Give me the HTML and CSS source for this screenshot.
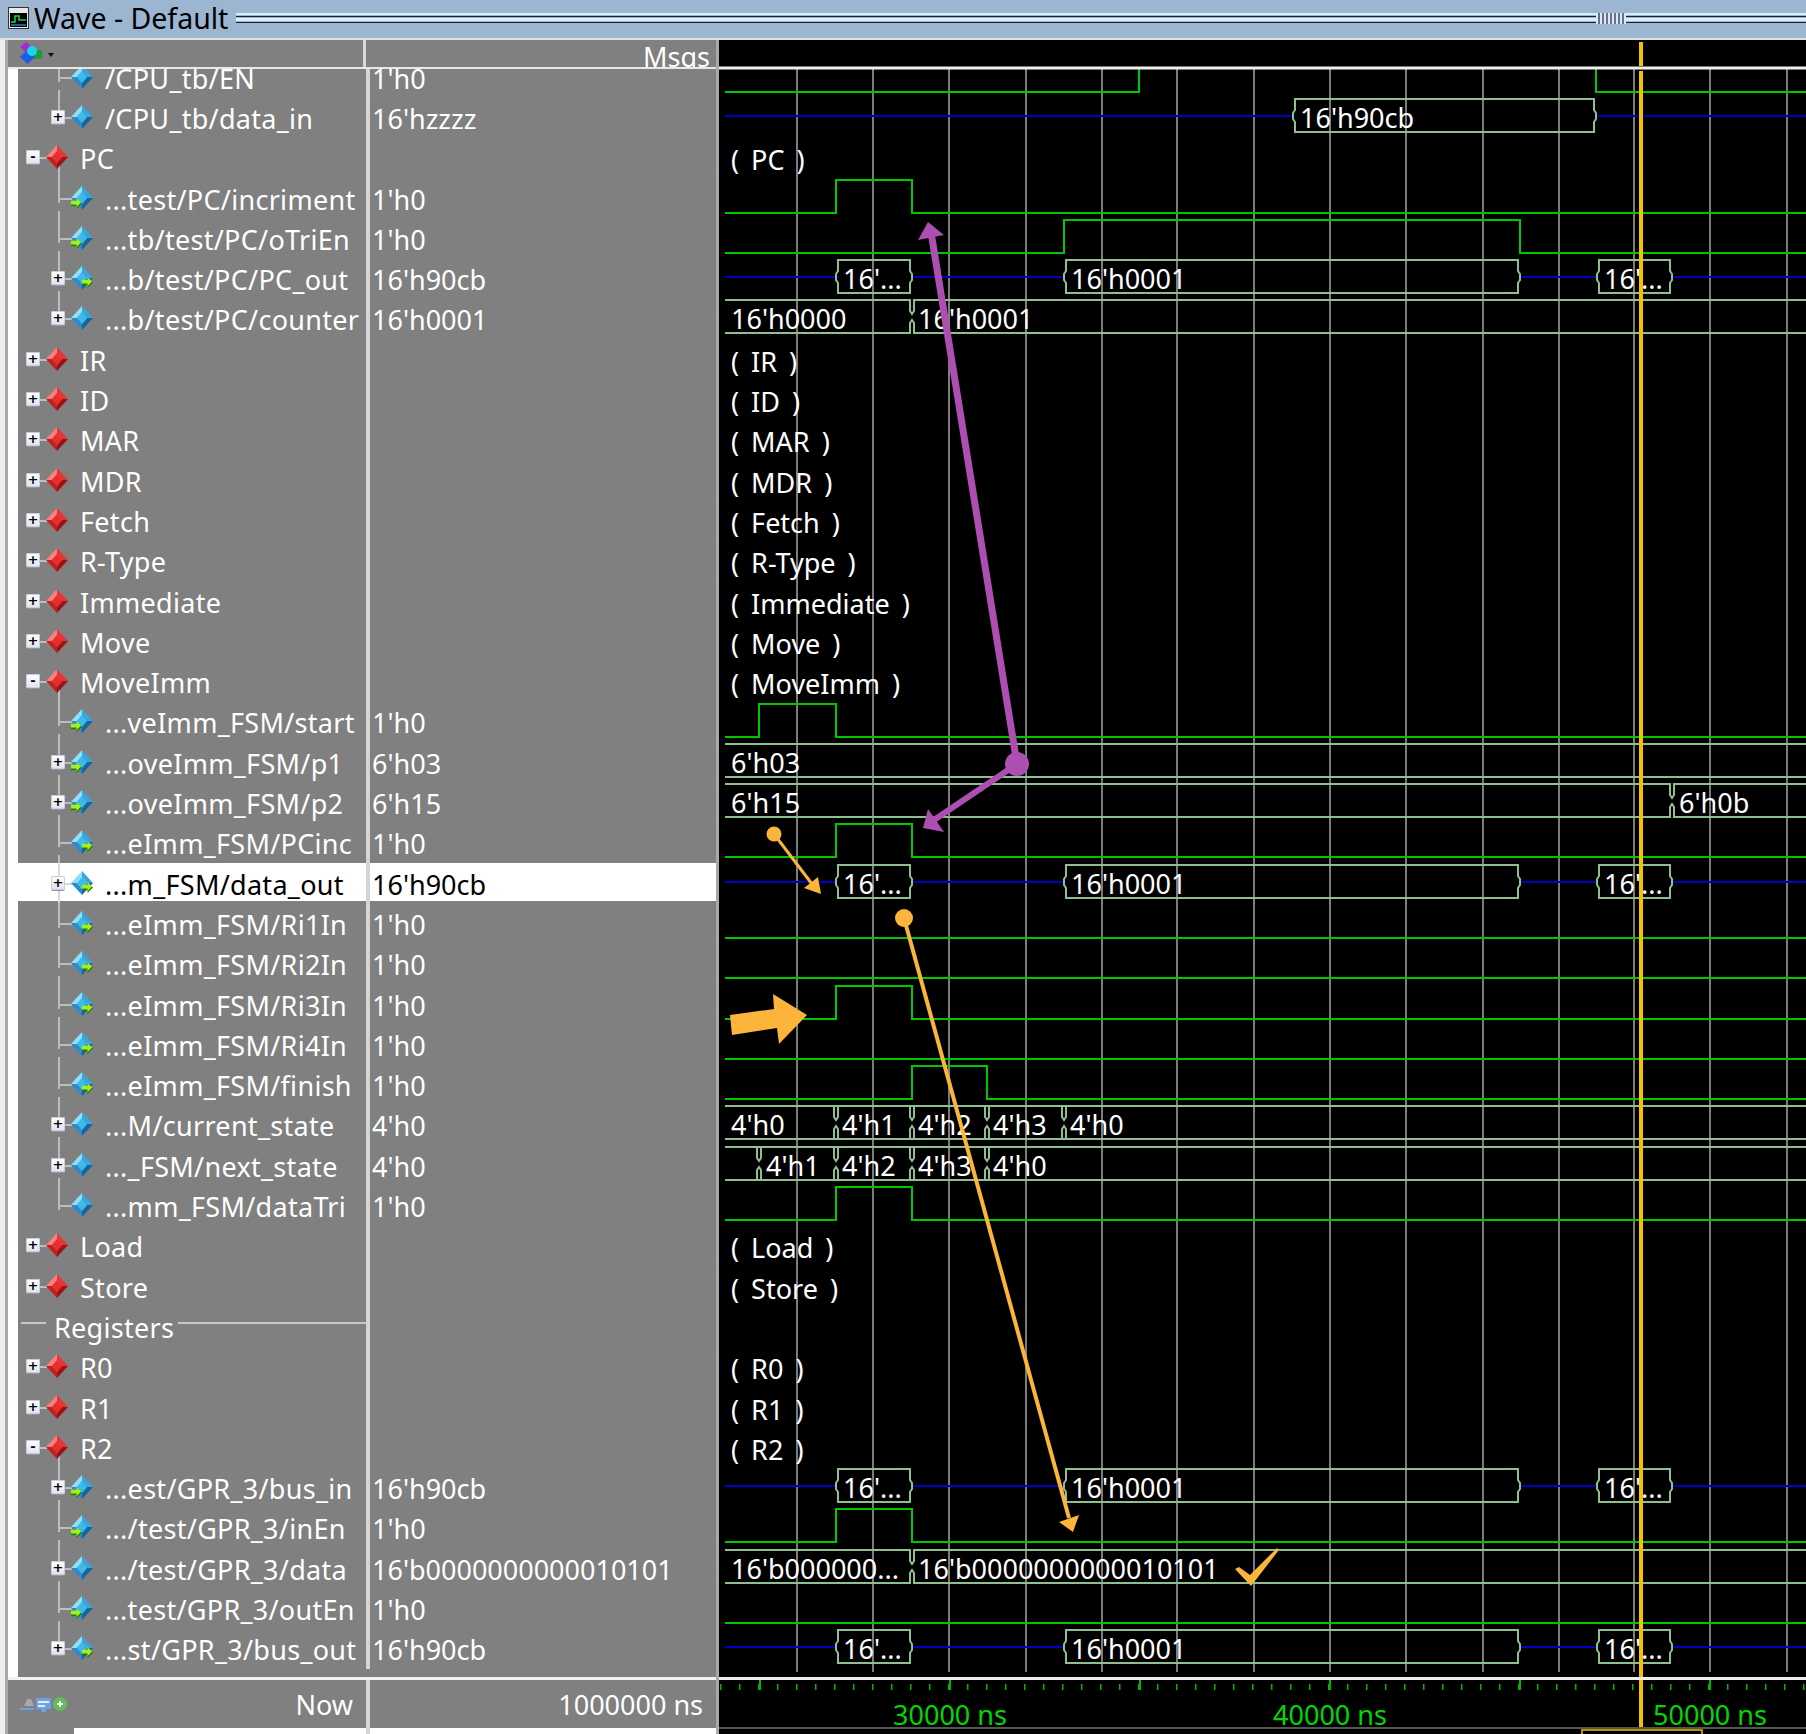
FILE: index.html
```html
<!DOCTYPE html>
<html lang="en">
<head>
    <meta charset="UTF-8">
    <title>Wave - Default</title>
    <link rel="stylesheet" href="styles.css">
</head>
<body>
<svg class="sprite" width="0" height="0">
    <symbol id="d-blue" viewBox="0 0 24 26">
        <polygon points="12,1 1,13 7,13 12,7" fill="#8fdff8"/>
        <polygon points="12,1 23,13 17,13 12,7" fill="#35a6df"/>
        <polygon points="23,13 12,25 12,19 17,13" fill="#15659e"/>
        <polygon points="1,13 12,25 12,19 7,13" fill="#2a8ccc"/>
        <polygon points="12,7 17,13 12,19 7,13" fill="#3cbaea"/>
    </symbol>
    <symbol id="d-red" viewBox="0 0 24 26">
        <polygon points="12,1 1,13 7,13 12,7" fill="#f98080"/>
        <polygon points="12,1 23,13 17,13 12,7" fill="#e83434"/>
        <polygon points="23,13 12,25 12,19 17,13" fill="#a01212"/>
        <polygon points="1,13 12,25 12,19 7,13" fill="#c42020"/>
        <polygon points="12,7 17,13 12,19 7,13" fill="#ea2c2c"/>
    </symbol>
    <symbol id="arrow" viewBox="0 0 12 12">
        <polygon points="0,4 6,4 6,1 12,6 6,12 6,9 0,9" fill="#1f7d10"/>
        <polygon points="0,3 6,3 6,0 11,5 6,10 6,7 0,7" fill="#a4f01e"/>
    </symbol>
    <symbol id="sig" viewBox="0 0 24 26"><use href="#d-blue"/></symbol>
    <symbol id="sig-in" viewBox="0 0 24 26">
        <use href="#d-blue"/>
        <use href="#arrow" x="1" y="13" width="11" height="11"/>
    </symbol>
    <symbol id="sig-out" viewBox="0 0 24 26">
        <use href="#d-blue"/>
        <use href="#arrow" x="12" y="12" width="11" height="11"/>
    </symbol>
</svg>

<div class="app">
    <div class="title">
        <svg class="title-icon" width="21" height="22" viewBox="0 0 21 22">
            <rect x="0.5" y="0.5" width="20" height="21" fill="#e8e8e8" stroke="#333"/>
            <rect x="2" y="6" width="17" height="14" fill="#000"/>
            <path d="M3 15H7V9H11V13H18" fill="none" stroke="#19d64a" stroke-width="1.5"/>
            <path d="M3 18H18" stroke="#2a7ae0" stroke-width="1.5"/>
        </svg>
        <span class="title-text">Wave - Default</span>
        <div class="grip">
            <div class="grip-lines"></div>
            <div class="grip-dots"></div>
            <div class="grip-lines"></div>
        </div>
    </div>

    <div class="main">
        <div class="side">
            <div class="head">
                <div class="hname">
                    <svg width="40" height="24" viewBox="0 0 40 24">
                        <polygon points="2,6 8,1 14,6 8,11" fill="#a32bd0"/>
                        <rect x="10" y="9" width="14" height="9" fill="#1f9a3a"/>
                        <polygon points="2,16 9.5,9 17,16 9.5,23" fill="#1c5de8"/>
                        <circle cx="14" cy="10" r="5" fill="#19d6ee"/>
                        <polygon points="30,12 36,12 33,16" fill="#111"/>
                    </svg>
                </div>
                <div class="hval">Msgs</div>
            </div>

            <div class="list">
                <div class="row first"><div class="name kid"><b class="nobox"></b><svg class="ic"><use href="#sig"/></svg><span>/CPU_tb/EN</span></div><div class="val">1'h0</div></div>
                <div class="row"><div class="name kid end"><b class="box">+</b><svg class="ic"><use href="#sig"/></svg><span>/CPU_tb/data_in</span></div><div class="val">16'hzzzz</div></div>
                <div class="row"><div class="name top open"><b class="box">-</b><svg class="ic"><use href="#d-red"/></svg><span>PC</span></div><div class="val"></div></div>
                <div class="row"><div class="name kid"><b class="nobox"></b><svg class="ic"><use href="#sig-in"/></svg><span>...test/PC/incriment</span></div><div class="val">1'h0</div></div>
                <div class="row"><div class="name kid"><b class="nobox"></b><svg class="ic"><use href="#sig-in"/></svg><span>...tb/test/PC/oTriEn</span></div><div class="val">1'h0</div></div>
                <div class="row"><div class="name kid"><b class="box">+</b><svg class="ic"><use href="#sig-out"/></svg><span>...b/test/PC/PC_out</span></div><div class="val">16'h90cb</div></div>
                <div class="row"><div class="name kid end"><b class="box">+</b><svg class="ic"><use href="#sig"/></svg><span>...b/test/PC/counter</span></div><div class="val">16'h0001</div></div>
                <div class="row"><div class="name top"><b class="box">+</b><svg class="ic"><use href="#d-red"/></svg><span>IR</span></div><div class="val"></div></div>
                <div class="row"><div class="name top"><b class="box">+</b><svg class="ic"><use href="#d-red"/></svg><span>ID</span></div><div class="val"></div></div>
                <div class="row"><div class="name top"><b class="box">+</b><svg class="ic"><use href="#d-red"/></svg><span>MAR</span></div><div class="val"></div></div>
                <div class="row"><div class="name top"><b class="box">+</b><svg class="ic"><use href="#d-red"/></svg><span>MDR</span></div><div class="val"></div></div>
                <div class="row"><div class="name top"><b class="box">+</b><svg class="ic"><use href="#d-red"/></svg><span>Fetch</span></div><div class="val"></div></div>
                <div class="row"><div class="name top"><b class="box">+</b><svg class="ic"><use href="#d-red"/></svg><span>R-Type</span></div><div class="val"></div></div>
                <div class="row"><div class="name top"><b class="box">+</b><svg class="ic"><use href="#d-red"/></svg><span>Immediate</span></div><div class="val"></div></div>
                <div class="row"><div class="name top"><b class="box">+</b><svg class="ic"><use href="#d-red"/></svg><span>Move</span></div><div class="val"></div></div>
                <div class="row"><div class="name top open"><b class="box">-</b><svg class="ic"><use href="#d-red"/></svg><span>MoveImm</span></div><div class="val"></div></div>
                <div class="row"><div class="name kid"><b class="nobox"></b><svg class="ic"><use href="#sig-in"/></svg><span>...veImm_FSM/start</span></div><div class="val">1'h0</div></div>
                <div class="row"><div class="name kid"><b class="box">+</b><svg class="ic"><use href="#sig-in"/></svg><span>...oveImm_FSM/p1</span></div><div class="val">6'h03</div></div>
                <div class="row"><div class="name kid"><b class="box">+</b><svg class="ic"><use href="#sig-in"/></svg><span>...oveImm_FSM/p2</span></div><div class="val">6'h15</div></div>
                <div class="row"><div class="name kid"><b class="nobox"></b><svg class="ic"><use href="#sig-out"/></svg><span>...eImm_FSM/PCinc</span></div><div class="val">1'h0</div></div>
                <div class="row sel"><div class="name kid"><b class="box">+</b><svg class="ic"><use href="#sig-out"/></svg><span>...m_FSM/data_out</span></div><div class="val">16'h90cb</div></div>
                <div class="row"><div class="name kid"><b class="nobox"></b><svg class="ic"><use href="#sig-out"/></svg><span>...eImm_FSM/Ri1In</span></div><div class="val">1'h0</div></div>
                <div class="row"><div class="name kid"><b class="nobox"></b><svg class="ic"><use href="#sig-out"/></svg><span>...eImm_FSM/Ri2In</span></div><div class="val">1'h0</div></div>
                <div class="row"><div class="name kid"><b class="nobox"></b><svg class="ic"><use href="#sig-out"/></svg><span>...eImm_FSM/Ri3In</span></div><div class="val">1'h0</div></div>
                <div class="row"><div class="name kid"><b class="nobox"></b><svg class="ic"><use href="#sig-out"/></svg><span>...eImm_FSM/Ri4In</span></div><div class="val">1'h0</div></div>
                <div class="row"><div class="name kid"><b class="nobox"></b><svg class="ic"><use href="#sig-out"/></svg><span>...eImm_FSM/finish</span></div><div class="val">1'h0</div></div>
                <div class="row"><div class="name kid"><b class="box">+</b><svg class="ic"><use href="#sig"/></svg><span>...M/current_state</span></div><div class="val">4'h0</div></div>
                <div class="row"><div class="name kid"><b class="box">+</b><svg class="ic"><use href="#sig"/></svg><span>..._FSM/next_state</span></div><div class="val">4'h0</div></div>
                <div class="row"><div class="name kid end"><b class="nobox"></b><svg class="ic"><use href="#sig"/></svg><span>...mm_FSM/dataTri</span></div><div class="val">1'h0</div></div>
                <div class="row"><div class="name top"><b class="box">+</b><svg class="ic"><use href="#d-red"/></svg><span>Load</span></div><div class="val"></div></div>
                <div class="row"><div class="name top"><b class="box">+</b><svg class="ic"><use href="#d-red"/></svg><span>Store</span></div><div class="val"></div></div>
                <div class="row"><div class="name divider"><span>Registers</span></div><div class="val"></div></div>
                <div class="row"><div class="name top"><b class="box">+</b><svg class="ic"><use href="#d-red"/></svg><span>R0</span></div><div class="val"></div></div>
                <div class="row"><div class="name top"><b class="box">+</b><svg class="ic"><use href="#d-red"/></svg><span>R1</span></div><div class="val"></div></div>
                <div class="row"><div class="name top open"><b class="box">-</b><svg class="ic"><use href="#d-red"/></svg><span>R2</span></div><div class="val"></div></div>
                <div class="row"><div class="name kid"><b class="box">+</b><svg class="ic"><use href="#sig-in"/></svg><span>...est/GPR_3/bus_in</span></div><div class="val">16'h90cb</div></div>
                <div class="row"><div class="name kid"><b class="nobox"></b><svg class="ic"><use href="#sig-in"/></svg><span>.../test/GPR_3/inEn</span></div><div class="val">1'h0</div></div>
                <div class="row"><div class="name kid"><b class="box">+</b><svg class="ic"><use href="#sig"/></svg><span>.../test/GPR_3/data</span></div><div class="val">16'b0000000000010101</div></div>
                <div class="row"><div class="name kid"><b class="nobox"></b><svg class="ic"><use href="#sig-in"/></svg><span>...test/GPR_3/outEn</span></div><div class="val">1'h0</div></div>
                <div class="row"><div class="name kid end"><b class="box">+</b><svg class="ic"><use href="#sig-out"/></svg><span>...st/GPR_3/bus_out</span></div><div class="val">16'h90cb</div></div>
            </div>

            <div class="foot">
                <div class="fname">
                    <svg width="48" height="16" viewBox="0 0 48 16">
                        <path d="M4 9L7 2H11L14 9Z" fill="#a8a8a8"/>
                        <path d="M0 12H14" stroke="#6ba2e4" stroke-width="2"/>
                        <rect x="16" y="1" width="15" height="11" fill="#6ba2e4"/>
                        <rect x="18" y="4" width="11" height="2" fill="#e2ecf8"/>
                        <rect x="18" y="8" width="7" height="2" fill="#e2ecf8"/>
                        <rect x="21" y="12" width="5" height="3" fill="#6ba2e4"/>
                        <circle cx="40" cy="7" r="7" fill="#66bc5c"/>
                        <path d="M37 7H43M40 4V10" stroke="#eef8ec" stroke-width="2"/>
                    </svg>
                    <span>Now</span>
                </div>
                <div class="fval">1000000 ns</div>
            </div>
        </div>

        <svg class="waves" width="1087" height="1694" viewBox="719 40 1087 1694">
            <defs>
                <path id="pulse" class="g" d="M725 35H836V2H912V35H1806"/>
                <path id="flat" class="g" d="M725 35H1806"/>
                <g id="pcbus">
                    <path class="b" d="M725 19H836M912 19H1064M1520 19H1597M1672 19H1806"/>
                    <path class="bus" d="M838 2H910V13L912 16V22L910 25V35H838V25L836 22V16L838 13Z"/>
                    <path class="bus" d="M1066 2H1518V13L1520 16V22L1518 25V35H1066V25L1064 22V16L1066 13Z"/>
                    <path class="bus" d="M1599 2H1670V13L1672 16V22L1670 25V35H1599V25L1597 22V16L1599 13Z"/>
                    <text x="843" y="31">16'...</text>
                    <text x="1071" y="31">16'h0001</text>
                    <text x="1604" y="31">16'...</text>
                </g>
            </defs>

            <!-- grid every 2000 ns -->
            <path class="grid" d="M797 69V1672M873 69V1672M949 69V1672M1026 69V1672M1102 69V1672M1177 69V1672M1254 69V1672M1330 69V1672M1406 69V1672M1483 69V1672M1559 69V1672M1634 69V1672M1710 69V1672M1787 69V1672"/>

            <g transform="translate(0 57)"><path class="g" d="M725 35H1139V-20M1596 -20V35H1806"/></g>
            <g transform="translate(0 97)">
                <path class="b" d="M725 19H1293M1596 19H1806"/>
                <path class="bus" d="M1295 2H1594V13L1596 16V22L1594 25V35H1295V25L1293 22V16L1295 13Z"/>
                <text x="1300" y="31">16'h90cb</text>
            </g>
            <g transform="translate(0 137)"><text x="731" y="33">( PC )</text></g>
            <use href="#pulse" y="178"/>
            <g transform="translate(0 218)"><path class="g" d="M725 35H1064V2H1520V35H1806"/></g>
            <use href="#pcbus" y="258"/>
            <g transform="translate(0 298)">
                <path class="bus" d="M725 2H910V13L912 16L914 13V2H1806M1806 35H914V25L912 22L910 25V35H725"/>
                <text x="731" y="31">16'h0000</text>
                <text x="918" y="31">16'h0001</text>
            </g>
            <g transform="translate(0 339)"><text x="731" y="33">( IR )</text></g>
            <g transform="translate(0 379)"><text x="731" y="33">( ID )</text></g>
            <g transform="translate(0 419)"><text x="731" y="33">( MAR )</text></g>
            <g transform="translate(0 460)"><text x="731" y="33">( MDR )</text></g>
            <g transform="translate(0 500)"><text x="731" y="33">( Fetch )</text></g>
            <g transform="translate(0 540)"><text x="731" y="33">( R-Type )</text></g>
            <g transform="translate(0 581)"><text x="731" y="33">( Immediate )</text></g>
            <g transform="translate(0 621)"><text x="731" y="33">( Move )</text></g>
            <g transform="translate(0 661)"><text x="731" y="33">( MoveImm )</text></g>
            <g transform="translate(0 702)"><path class="g" d="M725 35H759V2H836V35H1806"/></g>
            <g transform="translate(0 742)">
                <path class="bus" d="M725 2H1806M725 35H1806"/>
                <text x="731" y="31">6'h03</text>
            </g>
            <g transform="translate(0 782)">
                <path class="bus" d="M725 2H1670V13L1672 16L1674 13V2H1806M1806 35H1674V25L1672 22L1670 25V35H725"/>
                <text x="731" y="31">6'h15</text>
                <text x="1679" y="31">6'h0b</text>
            </g>
            <use href="#pulse" y="822"/>
            <use href="#pcbus" y="863"/>
            <use href="#flat" y="903"/>
            <use href="#flat" y="943"/>
            <use href="#pulse" y="984"/>
            <use href="#flat" y="1024"/>
            <g transform="translate(0 1064)"><path class="g" d="M725 35H912V2H987V35H1806"/></g>
            <g transform="translate(0 1104)">
                <path class="bus" d="M725 2H1806M725 35H1806"/>
                <path class="bus" d="M834 2V13L836 16L838 13V2M838 35V25L836 22L834 25V35M910 2V13L912 16L914 13V2M914 35V25L912 22L910 25V35M985 2V13L987 16L989 13V2M989 35V25L987 22L985 25V35M1062 2V13L1064 16L1066 13V2M1066 35V25L1064 22L1062 25V35"/>
                <text x="731" y="31">4'h0</text>
                <text x="842" y="31">4'h1</text>
                <text x="918" y="31">4'h2</text>
                <text x="993" y="31">4'h3</text>
                <text x="1070" y="31">4'h0</text>
            </g>
            <g transform="translate(0 1145)">
                <path class="bus" d="M725 2H1806M725 35H1806"/>
                <path class="bus" d="M757 2V13L759 16L761 13V2M761 35V25L759 22L757 25V35M834 2V13L836 16L838 13V2M838 35V25L836 22L834 25V35M910 2V13L912 16L914 13V2M914 35V25L912 22L910 25V35M985 2V13L987 16L989 13V2M989 35V25L987 22L985 25V35"/>
                <text x="766" y="31">4'h1</text>
                <text x="842" y="31">4'h2</text>
                <text x="918" y="31">4'h3</text>
                <text x="993" y="31">4'h0</text>
            </g>
            <use href="#pulse" y="1185"/>
            <g transform="translate(0 1225)"><text x="731" y="33">( Load )</text></g>
            <g transform="translate(0 1266)"><text x="731" y="33">( Store )</text></g>
            <g transform="translate(0 1346)"><text x="731" y="33">( R0 )</text></g>
            <g transform="translate(0 1387)"><text x="731" y="33">( R1 )</text></g>
            <g transform="translate(0 1427)"><text x="731" y="33">( R2 )</text></g>
            <use href="#pcbus" y="1467"/>
            <use href="#pulse" y="1507"/>
            <g transform="translate(0 1548)">
                <path class="bus" d="M725 2H910V13L912 16L914 13V2H1806M1806 35H914V25L912 22L910 25V35H725"/>
                <text x="731" y="31">16'b000000...</text>
                <text x="918" y="31">16'b0000000000010101</text>
            </g>
            <use href="#flat" y="1588"/>
            <use href="#pcbus" y="1628"/>

            <!-- header, separators, ruler -->
            <rect x="719" y="40" width="1087" height="27" fill="#000"/>
            <path class="sep" d="M719 68H1806M719 1678.5H1806"/>
            <path class="cursor" d="M1641 42V66M1641 71V1677M1641 1680V1728"/>
            <rect x="1582" y="1730" width="120" height="10" fill="#000" stroke="#b89000" stroke-width="2"/>
            <path d="M719 1728H1806" stroke="#555" stroke-width="2"/>
            <path class="tick" d="M720 1687H1806"/>
            <path class="major" d="M759 1685H1806"/>
            <text class="ruler" x="950" y="1725">30000 ns</text>
            <text class="ruler" x="1330" y="1725">40000 ns</text>
            <text class="ruler" x="1710" y="1725">50000 ns</text>

            <!-- annotations drawn on top of the capture -->
            <path class="purple" stroke-width="7" d="M1017 764L931 232"/>
            <polygon fill="#ad4fb0" points="928,222 918,240 944,235"/>
            <path class="purple" stroke-width="6" d="M1017 764L934 820"/>
            <polygon fill="#ad4fb0" points="923,828 928,809 944,832"/>
            <circle cx="1017" cy="764" r="12" fill="#ad4fb0"/>

            <path class="orange" stroke-width="3" d="M774 834L815 888"/>
            <polygon class="ofill" points="821,894 804,888 818,877"/>
            <circle class="ofill" cx="774" cy="834" r="7.5"/>
            <path class="orange" stroke-width="4" d="M904 918L1069 1518"/>
            <polygon class="ofill" points="1073,1532 1059,1522 1079,1515"/>
            <circle class="ofill" cx="904" cy="918" r="9"/>
            <polygon class="ofill" points="730,1015 774,1009 773,994 807,1015 779,1044 777,1028 732,1035"/>
            <polygon class="ofill" points="1235,1569 1251,1586 1279,1550 1277,1548 1250,1575 1239,1567"/>
        </svg>
    </div>
</div>
</body>
</html>
```

FILE: styles.css
```css
*
{
    box-sizing: border-box;
}
html, body
{
    margin: 0;
    padding: 0;
    background: #000;
}
.sprite
{
    display: block;
    height: 0;
}
.app
{
    width: 1806px;
    height: 1734px;
    display: flex;
    flex-direction: column;
    overflow: hidden;
    font-family: "Noto Sans", Tahoma, sans-serif;
    font-size: 27px;
    line-height: 43px;
    color: #fff;
}
.title
{
    height: 40px;
    flex: none;
    display: flex;
    align-items: center;
    padding: 0 0 2px 8px;
    background: #9cb6d2;
    border-bottom: 2px solid #e2e2e2;
    color: #000;
}
.title-icon
{
    flex: none;
    margin-right: 5px;
}
.title-text
{
    flex: none;
    margin-right: 8px;
    font-size: 28.5px;
    line-height: 38px;
}
.grip
{
    flex: 1;
    display: flex;
    align-items: center;
}
.grip-lines
{
    height: 11px;
    background:
        linear-gradient(#d9eefb, #d9eefb) 0 0 / 100% 2px no-repeat,
        linear-gradient(#1c2328, #1c2328) 0 3px / 100% 1px no-repeat,
        linear-gradient(#d9eefb, #d9eefb) 0 5px / 100% 3px no-repeat,
        linear-gradient(#1c2328, #1c2328) 0 9px / 100% 1px no-repeat;
}
.grip-lines:first-child
{
    width: 1360px;
}
.grip-lines:last-child
{
    flex: 1;
}
.grip-dots
{
    width: 30px;
    height: 11px;
    background: repeating-linear-gradient(90deg, #dfe8f2 0 2px, #63748a 2px 4px);
}
.main
{
    flex: 1;
    display: flex;
    min-height: 0;
}
.side
{
    width: 719px;
    flex: none;
    display: flex;
    flex-direction: column;
    background: #808080;
    border-left: 5px solid #eeeeee;
    border-right: 3px solid #a8a8a8;
    box-shadow: inset 3px 0 0 #a8a8a8;
}
.head
{
    height: 29px;
    flex: none;
    display: flex;
    margin-left: 3px;
    border-bottom: 2px solid #e8e8e8;
}
.hname
{
    width: 358px;
    flex: none;
    padding: 1px 0 0 10px;
    border-right: 3px solid #d8d8d8;
}
.hname svg
{
    display: block;
}
.hval
{
    flex: 1;
    height: 27px;
    overflow: hidden;
    text-align: right;
    padding-right: 6px;
    line-height: 33px;
}
.list
{
    flex: 1;
    min-height: 0;
    overflow: hidden;
    margin-left: 3px;
    border-left: 10px solid #fff;
}
.row
{
    height: 40.3px;
    display: flex;
}
.row.first
{
    margin-top: -12.3px;
}
.name
{
    width: 352px;
    flex: none;
    display: flex;
    align-items: flex-start;
    overflow: hidden;
    white-space: nowrap;
    letter-spacing: 0.3px;
    border-right: 4px solid #d4d4d4;
    background-clip: padding-box;
}
.val
{
    flex: 1;
    padding-left: 2px;
    white-space: nowrap;
}
.box, .nobox
{
    width: 14px;
    height: 14px;
    flex: none;
    margin: 13px 0 0;
}
.box
{
    display: flex;
    align-items: center;
    justify-content: center;
    font-family: "DejaVu Sans", sans-serif;
    font-size: 13px;
    line-height: 14px;
    font-weight: 700;
    color: #000;
    background: linear-gradient(#ffffff, #dfe3ee);
    border-radius: 2px;
    box-shadow: 0 1px 0 #8f97ad, inset 0 0 0 1px #c9cede;
}
.ic
{
    width: 24px;
    height: 26px;
    flex: none;
    margin: 7px 11px 0 5px;
}
/* tree lines are painted as background layers of the name cell */
.kid
{
    padding-left: 33px;
    background:
        linear-gradient(#bdbdbd, #bdbdbd) 40px 20px / 14px 2px no-repeat,
        linear-gradient(#bdbdbd 25px, transparent 25px, transparent 33px, #bdbdbd 33px) 40px 0 / 2px 100% no-repeat;
}
.kid.end
{
    background:
        linear-gradient(#bdbdbd, #bdbdbd) 40px 20px / 14px 2px no-repeat,
        linear-gradient(#bdbdbd, #bdbdbd) 40px 0 / 2px 25px no-repeat;
}
.top
{
    padding-left: 8px;
    background: linear-gradient(#bdbdbd, #bdbdbd) 21px 20px / 8px 2px no-repeat;
}
.top.open
{
    background:
        linear-gradient(#bdbdbd, #bdbdbd) 21px 20px / 8px 2px no-repeat,
        linear-gradient(#bdbdbd, #bdbdbd) 40px 28px / 2px 100% no-repeat;
}
.divider
{
    padding-left: 36px;
    background:
        linear-gradient(#c8c8c8, #c8c8c8) 3px 16px / 25px 2px no-repeat,
        linear-gradient(#c8c8c8, #c8c8c8) 160px 16px / 100% 2px no-repeat;
}
.sel .name, .sel .val
{
    color: #000;
}
.sel .name
{
    background:
        linear-gradient(#d8d8d8, #d8d8d8) 40px 20px / 14px 2px no-repeat,
        linear-gradient(#d8d8d8, #d8d8d8) 40px 0 / 2px 100% no-repeat,
        linear-gradient(#fff, #fff) 0 0 / 100% 38px no-repeat;
}
.sel .val
{
    background: linear-gradient(#fff, #fff) 0 0 / 100% 38px no-repeat;
}
.foot
{
    height: 57px;
    flex: none;
    display: flex;
    margin-left: 3px;
    border-top: 3px solid #f2f2f2;
}
.fname
{
    width: 362px;
    flex: none;
    display: flex;
    align-items: flex-start;
    justify-content: space-between;
    padding: 3px 13px 0 12px;
    border-right: 4px solid #d4d4d4;
    background: linear-gradient(#fff, #fff) 66px 100% / 100% 6px no-repeat;
}
.fname svg
{
    margin-top: 14px;
    filter: blur(0.6px);
}
.fval
{
    flex: 1;
    padding: 3px 13px 0 0;
    text-align: right;
    background: linear-gradient(#fff, #fff) 0 100% / 100% 6px no-repeat;
}
.waves
{
    flex: none;
    display: block;
    background: #000;
}
.waves path, .waves use
{
    fill: none;
}
.waves text
{
    fill: #fff;
    font-family: "Noto Sans", Tahoma, sans-serif;
    font-size: 27px;
    word-spacing: 5px;
}
.waves .ruler
{
    fill: #00d800;
    text-anchor: middle;
    word-spacing: 0;
}
.grid
{
    stroke: #7c7c7c;
    stroke-width: 2;
}
.g
{
    stroke: #00c800;
    stroke-width: 2;
}
.b
{
    stroke: #0000c0;
    stroke-width: 2;
}
.bus
{
    stroke: #8fbf8f;
    stroke-width: 2;
}
.sep
{
    stroke: #eeeeee;
    stroke-width: 3;
}
.cursor
{
    stroke: #f5c000;
    stroke-width: 4;
}
.tick
{
    stroke: #00b400;
    stroke-width: 6;
    stroke-dasharray: 1.5 17.5;
}
.major
{
    stroke: #00b400;
    stroke-width: 10;
    stroke-dasharray: 2 188;
}
.purple
{
    stroke: #ad4fb0;
}
.orange
{
    stroke: #fbb53a;
}
.ofill
{
    fill: #fbb53a;
}
```
